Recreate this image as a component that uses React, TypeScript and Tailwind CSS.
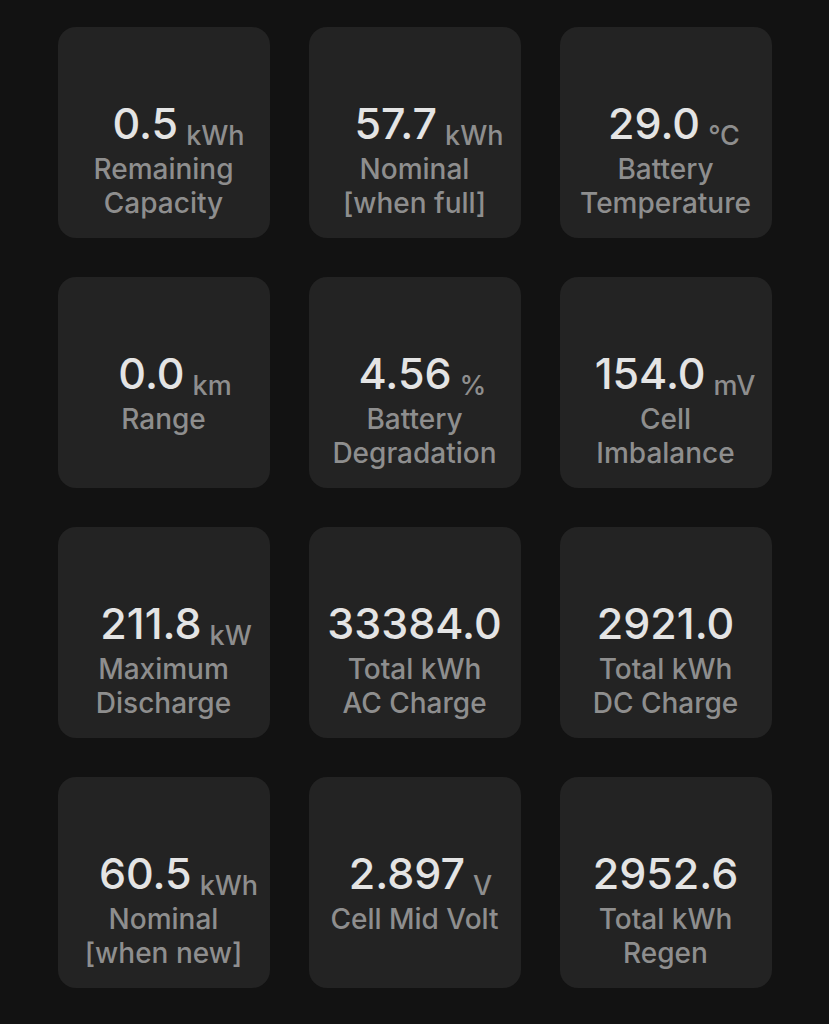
import React from 'react';

type Stat = {
    value: string;
    unit?: string;
    label: string[];
    shift: string;
};

const stats: Stat[] = [
    { value: '0.5', unit: 'kWh', label: ['Remaining', 'Capacity'], shift: 'pl-[30px]' },
    { value: '57.7', unit: 'kWh', label: ['Nominal', '[when full]'], shift: 'pl-[29px]' },
    { value: '29.0', unit: '°C', label: ['Battery', 'Temperature'], shift: 'pl-[17px]' },
    { value: '0.0', unit: 'km', label: ['Range'], shift: 'pl-[23px]' },
    { value: '4.56', unit: '%', label: ['Battery', 'Degradation'], shift: 'pl-[16px]' },
    { value: '154.0', unit: 'mV', label: ['Cell', 'Imbalance'], shift: 'pl-[19px]' },
    { value: '211.8', unit: 'kW', label: ['Maximum', 'Discharge'], shift: 'pl-[25px]' },
    { value: '33384.0', label: ['Total kWh', 'AC Charge'], shift: 'pl-0' },
    { value: '2921.0', label: ['Total kWh', 'DC Charge'], shift: 'pl-0' },
    { value: '60.5', unit: 'kWh', label: ['Nominal', '[when new]'], shift: 'pl-[30px]' },
    { value: '2.897', unit: 'V', label: ['Cell Mid Volt'], shift: 'pl-[12px]' },
    { value: '2952.6', label: ['Total kWh', 'Regen'], shift: 'pl-0' },
];

const StatCard = ({ stat }: { stat: Stat }) => (
    <div className="h-[211px] rounded-[18px] bg-[#232323] pt-[75px] flex flex-col items-center">
        {/* value + unit, unit sits a bit below the number baseline */}
        <div className={`flex items-end justify-center ${stat.shift}`}>
            <span className="text-[43px] leading-none font-medium text-[#e4e4e4]">{stat.value}</span>
            {stat.unit && (
                <span className="ml-2 mb-[-4px] text-[27px] leading-none font-medium text-[#8e8e8e]">{stat.unit}</span>
            )}
        </div>
        <div className="mt-[7px] text-center text-[28px] leading-[34px] font-medium text-[#8e8e8e]">
            {stat.label.map((line) => (
                <div key={line}>{line}</div>
            ))}
        </div>
    </div>
);

export default function App() {
    return (
        <div className="min-h-screen bg-[#121212] pt-[27px] font-['Inter',sans-serif]">
            <div className="mx-auto grid w-[714px] grid-cols-[repeat(3,212px)] gap-x-[39px] gap-y-[39px]">
                {stats.map((s) => (
                    <StatCard key={s.value} stat={s} />
                ))}
            </div>
        </div>
    );
}
